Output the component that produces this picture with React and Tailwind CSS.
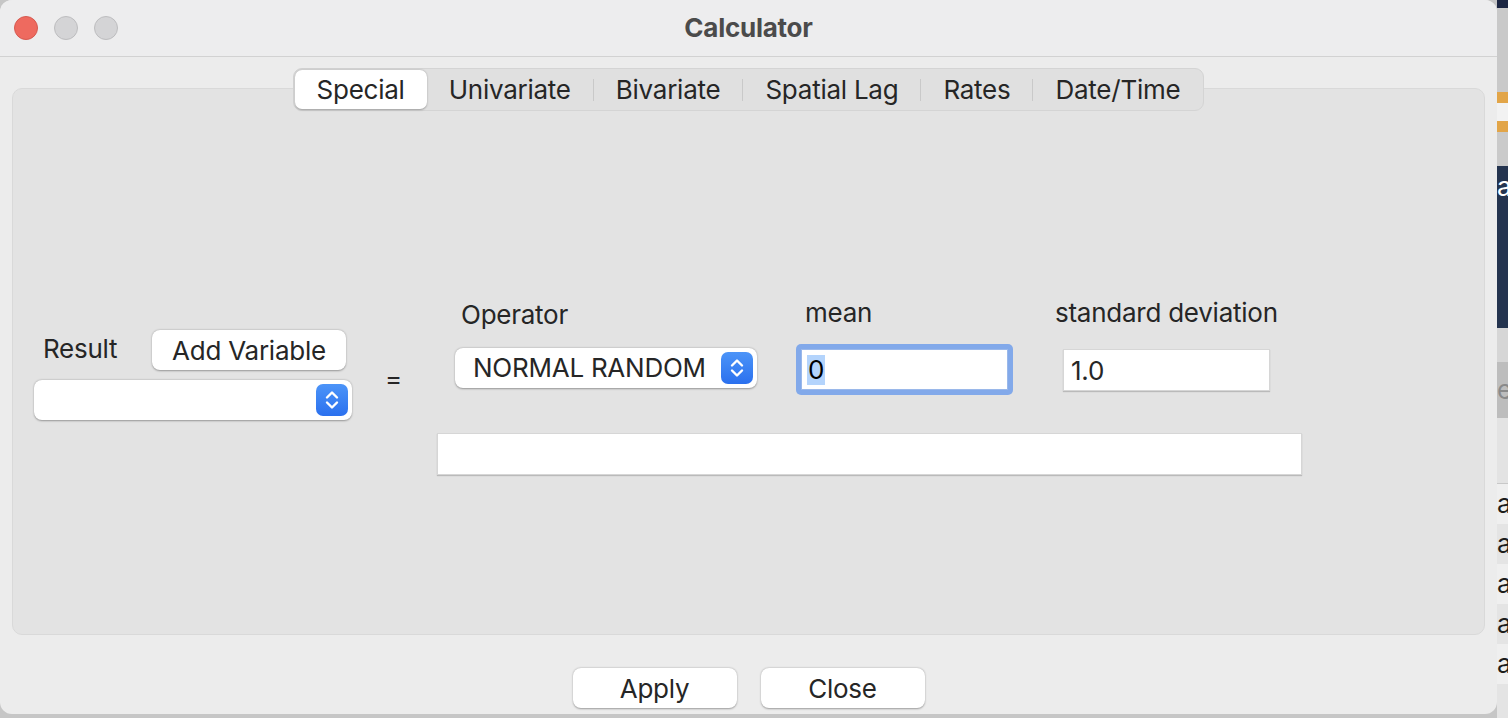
const tabs = ["Special", "Univariate", "Bivariate", "Spatial Lag", "Rates", "Date/Time"];

function Stepper() {
  return (
    <span className="w-[32px] h-[32px] rounded-[7px] bg-gradient-to-b from-[#4c94f8] to-[#2b70ee] flex items-center justify-center shrink-0">
      <svg width="32" height="32" viewBox="0 0 32 32" fill="none">
        <path d="M11 13.5 L16 8.5 L21 13.5" stroke="white" strokeWidth="2.4" strokeLinecap="round" strokeLinejoin="round" />
        <path d="M11 18.5 L16 23.5 L21 18.5" stroke="white" strokeWidth="2.4" strokeLinecap="round" strokeLinejoin="round" />
      </svg>
    </span>
  );
}

function Select({ value, className }) {
  return (
    <div className={"h-[40px] bg-white rounded-[8px] shadow-[0_0.5px_2px_rgba(0,0,0,0.35)] flex items-center justify-between pr-[4px] " + className}>
      <span className="pl-[18px] pb-[2px]">{value}</span>
      <Stepper />
    </div>
  );
}

function Button({ children, className }) {
  return (
    <button className={"h-[40px] bg-white rounded-[8px] shadow-[0_0.5px_2px_rgba(0,0,0,0.35)] flex items-center justify-center text-[#262626] " + className}>
      {children}
    </button>
  );
}

export default function App() {
  return (
    <div
      className="w-[1508px] h-[718px] bg-[#c6c6c6] flex overflow-hidden text-[26px] tracking-[-0.25px] text-[#262626]"
      style={{ fontFamily: "Inter, 'Noto Sans', sans-serif" }}
    >
      <div className="w-[1497px] h-[714px] shrink-0 rounded-[12px] bg-[#ececec] flex flex-col overflow-hidden">
        <div className="h-[57px] shrink-0 bg-[#ededee] border-b border-[#d2d2d2] grid grid-cols-[1fr_auto_1fr] items-center">
          <div className="flex items-center gap-[16px] pl-[14px]">
            <span className="w-[24px] h-[24px] rounded-full bg-[#ee6a5f] border border-[#d65a50]" />
            <span className="w-[24px] h-[24px] rounded-full bg-[#d4d4d6] border border-[#bdbdbf]" />
            <span className="w-[24px] h-[24px] rounded-full bg-[#d4d4d6] border border-[#bdbdbf]" />
          </div>
          <div className="font-bold text-[#4b4b4b] leading-none">Calculator</div>
          <div />
        </div>

        <div className="flex justify-center pt-[11px] relative z-10">
          <div className="h-[43px] bg-[#e0e0e0] border border-[#d4d4d4] rounded-[9px] flex items-center px-[1px]">
            {tabs.map((t, i) => (
              <div key={t} className="flex items-center h-full">
                {i > 1 && <span className="w-px h-[22px] bg-[#c9c9c9]" />}
                <span
                  className={
                    "h-[39px] px-[22px] flex items-center leading-none rounded-[7px] " +
                    (i === 0 ? "bg-white shadow-[0_0.5px_2px_rgba(0,0,0,0.3)]" : "")
                  }
                >
                  {t}
                </span>
              </div>
            ))}
          </div>
        </div>

        <div className="mt-[-23px] mx-[12px] h-[547px] shrink-0 bg-[#e3e3e3] border border-[#d9d9d9] rounded-[10px] flex items-start pt-[209px]">
          <div className="ml-[21px] mt-[32px] w-[318px] flex flex-col">
            <div className="flex items-center">
              <span className="ml-[9px] w-[109px] leading-none pb-[2px]">Result</span>
              <Button className="w-[194px]">Add Variable</Button>
            </div>
            <Select value="" className="mt-[10px] w-[318px]" />
          </div>

          <div className="ml-[33px] mt-[66px] w-[15px] leading-[30px]">=</div>

          <div className="ml-[37px] flex flex-col">
            <div className="flex items-start">
              <div className="ml-[18px] w-[302px] pt-[2px] flex flex-col">
                <span className="pl-[6px] leading-[30px]">Operator</span>
                <Select value="NORMAL RANDOM" className="mt-[18px] w-[302px]" />
              </div>
              <div className="ml-[39px] w-[217px] flex flex-col">
                <span className="pl-[9px] leading-[30px]">mean</span>
                <div className="mt-[16px] h-[51px] rounded-[5px] bg-[#82a9ea] p-[5px]">
                  <div className="h-full bg-white border border-[#9ab8ea] flex items-center pl-[5px]">
                    <span className="bg-[#b4d4fc] text-black leading-[30px] px-[1px]">0</span>
                  </div>
                </div>
              </div>
              <div className="ml-[42px] w-[215px] flex flex-col">
                <span className="leading-[30px] whitespace-nowrap">standard deviation</span>
                <div className="mt-[21px] ml-[8px] w-[207px] h-[42px] bg-white border border-[#d6d6d6] shadow-[0_1px_1px_rgba(0,0,0,0.18)] flex items-center pl-[7px]">
                  1.0
                </div>
              </div>
            </div>
            <div className="mt-[38px] w-[865px] h-[42px] bg-white border border-[#d6d6d6] shadow-[0_1px_1px_rgba(0,0,0,0.18)]" />
          </div>
        </div>

        <div className="mt-[33px] flex justify-center gap-[24px]">
          <Button className="w-[164px]">Apply</Button>
          <Button className="w-[164px]">Close</Button>
        </div>
      </div>

      <div className="flex-1 flex flex-col text-[#1d1d1d]">
        <div className="h-[8px] bg-[#1b2642]" />
        <div className="h-[84px] bg-[#c9c9c9]" />
        <div className="h-[40px] bg-[#e2a548] flex items-center">
          <span className="w-full h-[18px] bg-[#f2f2f2]" />
        </div>
        <div className="h-[34px] bg-[#cacaca]" />
        <div className="h-[162px] bg-[#24344f] text-white leading-[30px] pt-[6px] overflow-hidden">a</div>
        <div className="h-[34px] bg-[#d6d6d6]" />
        <div className="h-[56px] bg-[#bdbdbd] text-[#8a8a8a] leading-[56px] overflow-hidden">e</div>
        <div className="h-[66px] bg-[#e3e3e3] border-b border-[#c8c8c8]" />
        <div className="h-[40px] bg-[#efefef] leading-[40px] overflow-hidden">a</div>
        <div className="h-[40px] bg-[#e4e4e4] leading-[40px] overflow-hidden">a</div>
        <div className="h-[40px] bg-[#efefef] leading-[40px] overflow-hidden">a</div>
        <div className="h-[40px] bg-[#e4e4e4] leading-[40px] overflow-hidden">a</div>
        <div className="h-[40px] bg-[#efefef] leading-[40px] overflow-hidden">a</div>
        <div className="flex-1 bg-[#e4e4e4]" />
      </div>
    </div>
  );
}
